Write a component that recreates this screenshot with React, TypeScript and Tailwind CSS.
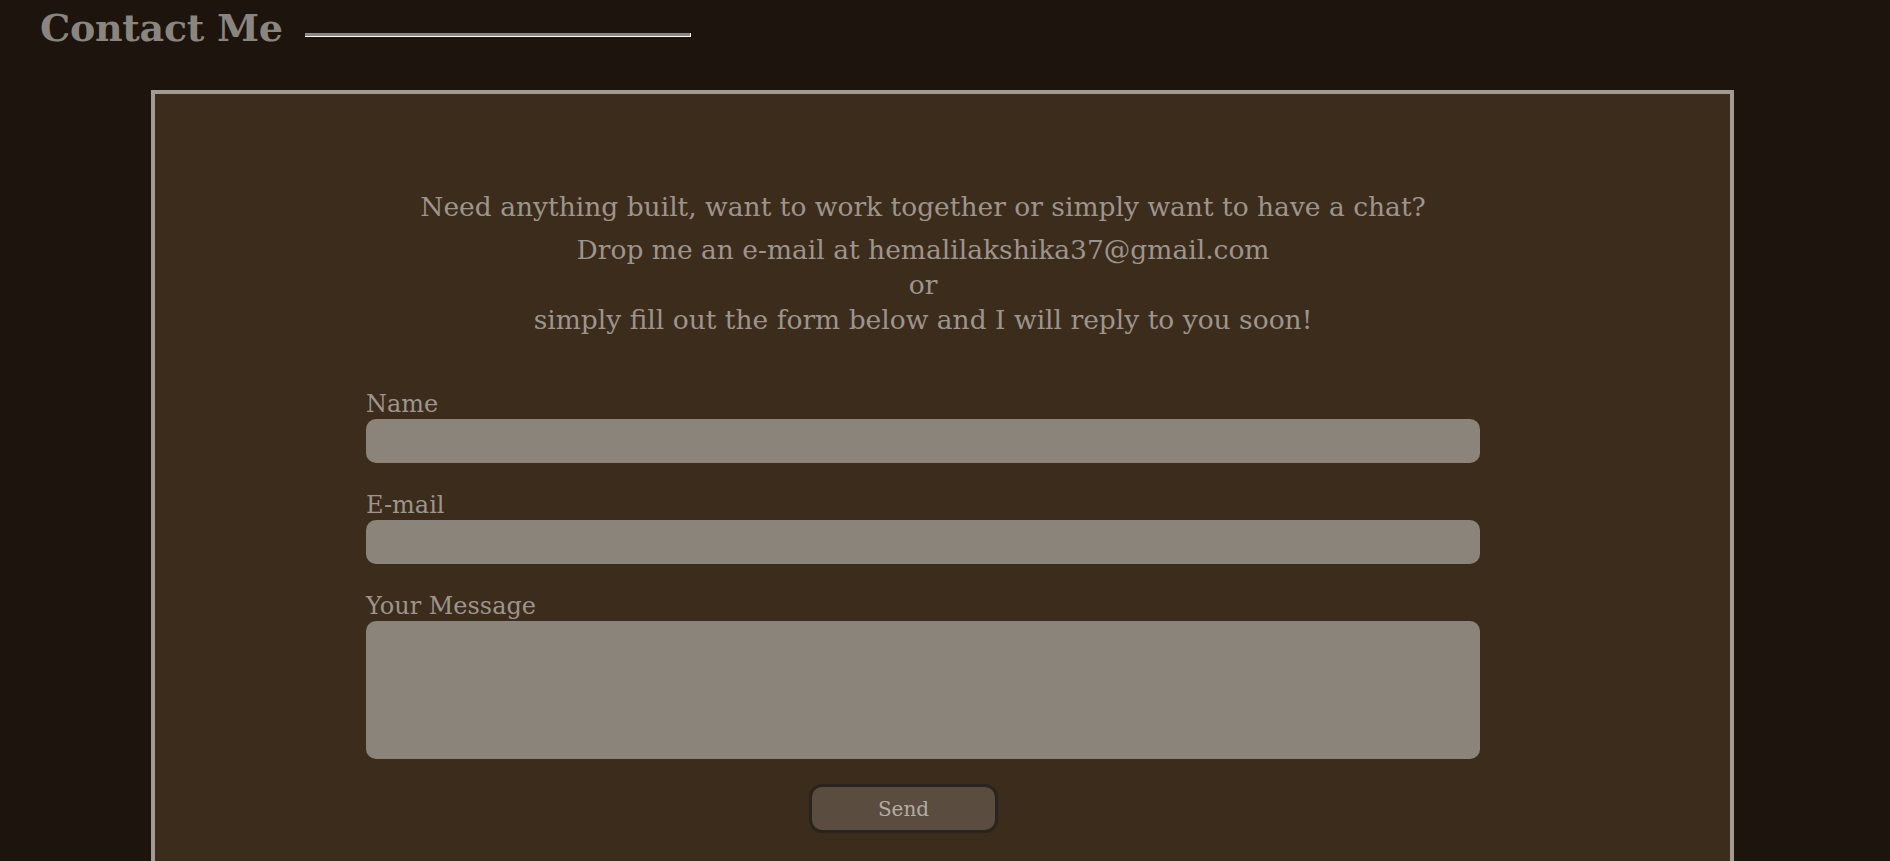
export default function App() {
  const serif = { fontFamily: '"DejaVu Serif", "Liberation Serif", serif' };
  return (
    <div className="min-h-screen bg-[#1c140d] pb-[40px]" style={serif}>
      {/* header */}
      <div className="flex items-center pl-[40px] pt-[6px] h-[50px]">
        <h1 className="text-[38px] leading-[46px] font-bold text-[#8a857f] tracking-[-0.3px]">Contact Me</h1>
        <div className="ml-[22px] mt-[14px] w-[386px] h-[4px] bg-[#8c8780] border-b border-r border-white" />
      </div>

      {/* card */}
      <div className="mt-[40px] ml-[151px] w-[1583px] border-4 border-[#a39b93] bg-[#3c2c1c] pt-[95px] pb-[80px] pl-[211px] pr-[250px]">
        <div className="text-center text-[#9d958d]">
          <p className="text-[26.5px] leading-[35px]">
            Need anything built, want to work together or simply want to have a chat?
          </p>
          <p className="mt-[8px] text-[26.5px] leading-[35px]">
            Drop me an e-mail at hemalilakshika37@gmail.com
            <br />
            or
            <br />
            simply fill out the form below and I will reply to you soon!
          </p>
        </div>

        <form className="mt-[52px] flex flex-col text-[#9d958d]" onSubmit={(e) => e.preventDefault()}>
          <label className="text-[24px] leading-[30px]">Name</label>
          <input className="h-[44px] w-full rounded-[10px] bg-[#8b847a] outline-none" />

          <label className="mt-[27px] text-[24px] leading-[30px]">E-mail</label>
          <input className="h-[44px] w-full rounded-[10px] bg-[#8b847a] outline-none" />

          <label className="mt-[27px] text-[24px] leading-[30px]">Your Message</label>
          <textarea className="block h-[138px] w-full rounded-[10px] bg-[#8b847a] outline-none resize-none" />

          <div className="mt-[25px] flex pl-[443px]">
            <button
              type="submit"
              className="w-[189px] h-[49px] rounded-[13px] border-[3px] border-[#2a241e] bg-[#5a4c3f] text-[20px] leading-none text-[#b3aca4]"
            >
              Send
            </button>
          </div>
        </form>
      </div>
    </div>
  );
}
